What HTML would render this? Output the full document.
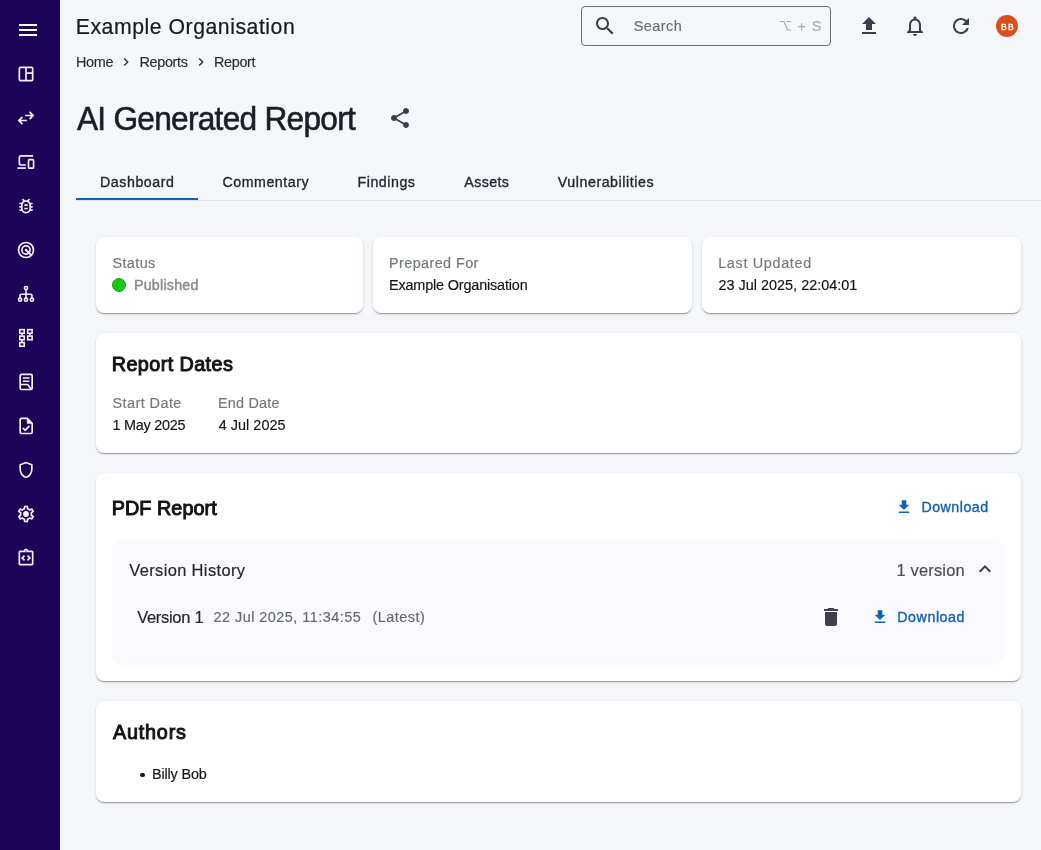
<!DOCTYPE html>
<html lang="en">
<head>
<meta charset="utf-8">
<title>AI Generated Report</title>
<style>
*{box-sizing:border-box;margin:0;padding:0}
html,body{width:1041px;height:850px;overflow:hidden;background:#f5f6fa;font-family:"Liberation Sans",sans-serif}
#app{position:relative;will-change:transform;width:1041px;height:850px;overflow:hidden;background:#f5f6fa}
.abs{position:absolute}
.t{position:absolute;white-space:pre;line-height:1;font-family:"Liberation Sans",sans-serif}
#side{position:absolute;left:0;top:0;width:60px;height:850px;background:#1c0458}
.card{position:absolute;background:#fff;border-radius:8px;box-shadow:0 2px 1px -1px rgba(0,0,0,.2),0 1px 1px 0 rgba(0,0,0,.14),0 1px 3px 0 rgba(0,0,0,.12)}
#search{position:absolute;left:581px;top:6px;width:250px;height:40px;border:1px solid #6c6e72;border-radius:4px}
#tabline{position:absolute;left:76px;top:200px;width:965px;height:1px;background:#e2e4e9}
#tabind{position:absolute;left:76px;top:198px;width:122px;height:2px;background:#1060b5}
#panel{position:absolute;left:112px;top:540px;width:892px;height:125px;border-radius:10px;background:#f9f9fe}
#dot{position:absolute;left:112px;top:278px;width:14px;height:14px;border-radius:50%;background:#17c917;border:1px solid #16a516}
#avatar{position:absolute;left:996px;top:15px;width:22px;height:22px;border-radius:50%;background:#d9501f}
#bullet{position:absolute;left:140px;top:772.6px;width:4.5px;height:4.5px;border-radius:50%;background:#131417}
svg{position:absolute;display:block;overflow:visible}
</style>
</head>
<body>
<div id="app">
<div id="side">
<svg style="left:16px;top:18px" width="24" height="24" viewBox="0 0 24 24" fill="#fff"><path d="M3 18h18v-2H3v2zm0-5h18v-2H3v2zm0-7v2h18V6H3z"/></svg>
<!-- space_dashboard -->
<svg style="left:16px;top:64px" width="20" height="20" viewBox="0 0 24 24" fill="none" stroke="#f6efff" stroke-width="2"><rect x="4" y="4" width="16" height="16" rx="1.5"/><path d="M12 4V20M12 11H20"/></svg>
<!-- swap_horiz -->
<svg style="left:16px;top:108px" width="20" height="20" viewBox="0 -960 960 960" fill="#f6efff"><path d="M280-160 80-360l200-200 56 57-103 103h287v80H233l103 103-56 57Zm400-240-56-57 103-103H440v-80h287L624-743l56-57 200 200-200 200Z"/></svg>
<!-- devices -->
<svg style="left:16px;top:152px" width="20" height="20" viewBox="0 0 24 24" fill="none" stroke="#f6efff" stroke-width="2"><path d="M20.6 4.7H6a2 2 0 0 0-2 2v6.900a2 2 0 0 0 2 2H11.900"/><path d="M1.700 19.300H11.900"/><rect x="15" y="9.200" width="6.100" height="10.200" rx="1.200"/></svg>
<!-- bug_report -->
<svg style="left:16px;top:196px" width="20" height="20" viewBox="0 0 24 24" fill="#f6efff"><path d="M20 8h-2.810c-.45-.78-1.070-1.450-1.820-1.960L17 4.410 15.590 3l-2.170 2.170C12.960 5.060 12.490 5 12 5s-.96.060-1.410.17L8.410 3 7 4.410l1.620 1.630C7.880 6.550 7.260 7.220 6.810 8H4v2h2.090c-.05.33-.09.66-.09 1v1H4v2h2v1c0 .34.04.67.09 1H4v2h2.810c1.040 1.790 2.970 3 5.190 3s4.150-1.210 5.190-3H20v-2h-2.090c.05-.33.09-.66.09-1v-1h2v-2h-2v-1c0-.34-.04-.67-.09-1H20V8zm-4 4v3c0 .22-.03.47-.07.7l-.1.65-.37.65c-.72 1.240-2.040 2-3.460 2s-2.740-.77-3.460-2l-.37-.64-.1-.65C8.030 15.480 8 15.230 8 15v-4c0-.23.03-.48.07-.7l.1-.65.37-.65c.3-.52.72-.97 1.210-1.310l.57-.39.74-.18c.31-.08.63-.12.940-.12.32 0 .63.04.95.12l.68.16.61.42c.5.34.91.78 1.210 1.310l.38.65.1.65c.04.22.07.47.07.69v1zm-6 2h4v2h-4zm0-4h4v2h-4z"/></svg>
<!-- target -->
<svg style="left:16px;top:240px" width="20" height="20" viewBox="0 0 24 24" fill="none" stroke="#f6efff" stroke-width="2"><circle cx="12" cy="12" r="9"/><circle cx="12" cy="12" r="4.900"/><path d="M12 12L18.200 18.200" stroke-width="2.200"/><circle cx="12" cy="12" r="1.500" fill="#f6efff" stroke="none"/></svg>
<!-- tree -->
<svg style="left:16px;top:284px" width="20" height="20" viewBox="0 0 24 24" fill="none" stroke="#f6efff" stroke-width="1.900"><circle cx="12" cy="4.900" r="1.900"/><circle cx="4.900" cy="18.800" r="1.900"/><circle cx="12" cy="18.800" r="1.900"/><circle cx="19.100" cy="18.800" r="1.900"/><path d="M12 6.900V16.800M4.900 16.800V13.600a1.400 1.400 0 0 1 1.400-1.400H17.700a1.400 1.400 0 0 1 1.400 1.400V16.800"/></svg>
<!-- squares -->
<svg style="left:16px;top:328px" width="20" height="20" viewBox="0 0 24 24" fill="none" stroke="#f6efff" stroke-width="1.900"><rect x="4.550" y="1.950" width="5.300" height="4.400"/><rect x="4.550" y="9.700" width="5.300" height="4.400"/><rect x="4.550" y="17.500" width="5.300" height="4.400"/><rect x="14.050" y="1.950" width="5.300" height="4.400"/><rect x="14.050" y="9.700" width="5.300" height="4.400"/><path d="M7.200 7V9M7.200 14.800V16.800M16.700 7V9" stroke-width="1.900"/></svg>
<!-- doc lines -->
<svg style="left:16px;top:372px" width="20" height="20" viewBox="0 0 24 24" fill="none" stroke="#f6efff" stroke-width="2"><rect x="5" y="2.900" width="14.400" height="18.100" rx="1.500"/><path d="M8.300 7.100H16.100M8.300 11.100H16.100" stroke-width="1.900"/><path d="M5 14.900H14L18.300 20.400" stroke-width="1.900"/></svg>
<!-- task -->
<svg style="left:16px;top:416px" width="20" height="20" viewBox="0 0 24 24" fill="none" stroke="#f6efff" stroke-width="2" stroke-linejoin="round"><path d="M13.500 2.900H6.500A1.500 1.500 0 0 0 5 4.400V19.500A1.500 1.500 0 0 0 6.500 21H17.900A1.500 1.500 0 0 0 19.400 19.500V8.800Z"/><path d="M13.500 2.900V8.800H19.400Z" fill="#f6efff" stroke-width="1"/><path d="M8.200 14.400L11 17.200L16 11.800" stroke-width="2.100" stroke-linejoin="miter"/></svg>
<!-- shield -->
<svg style="left:16px;top:460px" width="20" height="20" viewBox="0 -960 960 960" fill="#f6efff"><path d="M480-80q-139-35-229.500-159.500T160-516v-244l320-120 320 120v244q0 152-90.500 276.500T480-80Zm0-84q104-33 172-132t68-220v-189l-240-90-240 90v189q0 121 68 220t172 132Zm0-316Z"/></svg>
<!-- gear -->
<svg style="left:16px;top:504px" width="20" height="20" viewBox="0 0 24 24" fill="#f6efff"><path d="M19.430 12.980c.04-.32.07-.64.07-.98 0-.34-.03-.66-.07-.98l2.110-1.650c.19-.15.24-.42.12-.64l-2-3.460c-.09-.16-.26-.25-.44-.25-.06 0-.12.010-.17.030l-2.490 1c-.52-.4-1.080-.73-1.690-.98l-.38-2.650C14.460 2.180 14.250 2 14 2h-4c-.25 0-.46.180-.49.420l-.38 2.650c-.61.250-1.170.59-1.690.98l-2.490-1c-.06-.02-.12-.03-.18-.03-.17 0-.34.090-.43.250l-2 3.460c-.13.220-.07.490.12.640l2.110 1.650c-.04.32-.07.65-.07.980 0 .33.030.66.070.98l-2.110 1.650c-.19.150-.24.420-.12.640l2 3.460c.09.160.26.250.44.250.06 0 .12-.010.17-.030l2.490-1c.52.400 1.080.73 1.690.98l.38 2.650c.03.240.24.420.49.420h4c.25 0 .46-.18.49-.42l.38-2.650c.61-.25 1.170-.59 1.690-.98l2.490 1c.06.020.12.030.18.030.17 0 .34-.090.43-.25l2-3.460c.12-.22.07-.49-.12-.64l-2.110-1.650zm-1.980-1.710c.04.31.05.52.05.73 0 .21-.02.43-.05.73l-.14 1.130.89.700 1.080.84-.7 1.210-1.270-.51-1.040-.42-.9.680c-.43.320-.84.560-1.250.73l-1.060.43-.16 1.130-.2 1.350h-1.400l-.19-1.350-.16-1.130-1.060-.43c-.43-.18-.83-.41-1.230-.71l-.91-.7-1.060.43-1.270.51-.7-1.210 1.080-.84.89-.7-.14-1.130c-.03-.31-.05-.54-.05-.74s.02-.43.05-.73l.14-1.130-.89-.7-1.080-.84.700-1.210 1.270.51 1.040.42.900-.68c.43-.32.840-.56 1.250-.73l1.060-.43.160-1.130.200-1.350h1.390l.19 1.350.16 1.130 1.060.43c.43.180.83.410 1.230.71l.91.700 1.060-.43 1.270-.51.700 1.210-1.070.85-.89.700.14 1.130z"/><circle cx="12" cy="12" r="3.500"/></svg>
<!-- integration_instructions -->
<svg style="left:16px;top:548px" width="20" height="20" viewBox="0 0 24 24" fill="#f6efff"><path d="M11 14.170 8.830 12 11 9.830 9.590 8.410 6 12l3.590 3.590zm3.410 1.420L18 12l-3.590-3.590L13 9.830 15.170 12 13 14.170z"/><path d="M19 3h-4.180C14.400 1.840 13.300 1 12 1s-2.400.84-2.820 2H5c-.14 0-.27.010-.4.040-.39.080-.74.280-1.010.55-.18.180-.33.400-.43.640-.1.230-.16.490-.16.770v14c0 .27.060.54.160.78s.25.450.43.640c.27.270.62.470 1.010.55.130.02.260.03.400.03h14c1.100 0 2-.9 2-2V5c0-1.100-.9-2-2-2zm-7-.25c.41 0 .75.340.75.750s-.34.750-.75.750-.75-.34-.75-.75.340-.75.750-.75zM19 19H5V5h14v14z"/></svg>

</div>
<div id="search"></div>
<div id="avatar"></div>
<div id="tabline"></div>
<div id="tabind"></div>
<div class="card" style="left:96px;top:237px;width:267px;height:76px"></div>
<div class="card" style="left:373px;top:237px;width:319px;height:76px"></div>
<div class="card" style="left:702px;top:237px;width:319px;height:76px"></div>
<div class="card" style="left:96px;top:333px;width:925px;height:120px"></div>
<div class="card" style="left:96px;top:473px;width:925px;height:208px"></div>
<div class="card" style="left:96px;top:701px;width:925px;height:101px"></div>
<div id="panel"></div>
<div id="dot"></div>
<div id="bullet"></div>
<svg style="left:593px;top:14px" width="24" height="24" viewBox="0 0 24 24" fill="#3b3e44"><path d="M15.5 14h-.79l-.28-.27C15.41 12.59 16 11.11 16 9.5 16 5.91 13.09 3 9.5 3S3 5.91 3 9.5 5.91 16 9.5 16c1.61 0 3.09-.59 4.23-1.57l.27.28v.79l5 4.99L20.49 19l-4.99-5zm-6 0C7.01 14 5 11.99 5 9.5S7.01 5 9.5 5 14 7.01 14 9.5 11.99 14 9.500 14z"/></svg>
<svg style="left:780.3px;top:21.1px" width="11" height="9.5" viewBox="0 0 11 9.5" fill="none" stroke="#a9abae" stroke-width="1.1"><path d="M0 0.55H3.9L7.6 8.95H11M6.6 0.55H11"/></svg>
<svg style="left:798.4px;top:23.15px" width="7.2" height="7.2" viewBox="0 0 7.2 7.2" fill="none" stroke="#a9abae" stroke-width="1.15"><path d="M0 3.6H7.2M3.6 0V7.2"/></svg>
<svg style="left:857px;top:14px" width="24" height="24" viewBox="0 0 24 24" fill="#3b3e4a"><path d="M9 16h6v-6h4l-7-7-7 7h4zm-4 2h14v2H5z"/></svg>
<svg style="left:903px;top:14px" width="24" height="24" viewBox="0 0 24 24" fill="#3b3e4a"><path d="M12 22c1.1 0 2-.9 2-2h-4c0 1.1.9 2 2 2zm6-6v-5c0-3.07-1.63-5.64-4.5-6.32V4c0-.83-.67-1.5-1.5-1.5s-1.5.67-1.5 1.5v.68C7.640 5.360 6 7.920 6 11v5l-2 2v1h16v-1l-2-2zm-2 1H8v-6c0-2.480 1.510-4.500 4-4.500s4 2.020 4 4.500v6z"/></svg>
<svg style="left:949px;top:14px" width="24" height="24" viewBox="0 0 24 24" fill="#3b3e4a"><path d="M17.65 6.35C16.2 4.9 14.21 4 12 4c-4.42 0-7.990 3.580-7.990 8s3.570 8 7.990 8c3.730 0 6.840-2.550 7.730-6h-2.080c-.82 2.330-3.040 4-5.650 4-3.310 0-6-2.690-6-6s2.690-6 6-6c1.660 0 3.140.69 4.220 1.780L13 11h7V4l-2.350 2.350z"/></svg>
<svg style="left:387.7px;top:106px" width="24" height="24" viewBox="0 0 24 24" fill="#3b3e44"><path d="M18 16.080c-.76 0-1.440.3-1.960.77L8.910 12.700c.05-.23.09-.46.09-.7s-.04-.47-.09-.7l7.050-4.110c.54.5 1.250.81 2.040.81 1.660 0 3-1.340 3-3s-1.340-3-3-3-3 1.340-3 3c0 .24.04.47.09.7L8.040 9.810C7.500 9.310 6.790 9 6 9c-1.660 0-3 1.340-3 3s1.340 3 3 3c.79 0 1.500-.31 2.040-.81l7.120 4.160c-.05.21-.08.43-.08.65 0 1.610 1.310 2.920 2.920 2.920s2.920-1.310 2.920-2.920-1.310-2.920-2.920-2.920z"/></svg>
<svg style="left:118.37px;top:54.35px" width="16" height="16" viewBox="0 0 24 24" fill="#2a2d33"><path d="M10 6L8.59 7.41 13.17 12l-4.58 4.59L10 18l6-6z"/></svg>
<svg style="left:193.07px;top:54.35px" width="16" height="16" viewBox="0 0 24 24" fill="#2a2d33"><path d="M10 6L8.59 7.41 13.17 12l-4.58 4.59L10 18l6-6z"/></svg>
<svg style="left:895.35px;top:497.85px" width="18" height="18" viewBox="0 0 24 24" fill="#1060b5"><path d="M5 20h14v-2H5v2zM19 9h-4V3H9v6H5l7 7 7-7z"/></svg>
<svg style="left:871.05px;top:607.9px" width="18" height="18" viewBox="0 0 24 24" fill="#1060b5"><path d="M5 20h14v-2H5v2zM19 9h-4V3H9v6H5l7 7 7-7z"/></svg>
<svg style="left:973px;top:557px" width="24" height="24" viewBox="0 0 24 24" fill="#3a3d44"><path d="M12 8l-6 6 1.41 1.41L12 10.83l4.59 4.58L18 14z"/></svg>
<svg style="left:819px;top:605px" width="24" height="24" viewBox="0 0 24 24" fill="#3d404c"><path d="M6 19c0 1.1.9 2 2 2h8c1.1 0 2-.9 2-2V7H6v12zM19 4h-3.5l-1-1h-5l-1 1H5v2h14V4z"/></svg>

<span class="t" style="left:75.75px;top:16.00px;font-size:21.22px;font-weight:400;letter-spacing:0.539px;color:#1a1b1f;-webkit-text-stroke:0.23px #1a1b1f;">Example Organisation</span>
<span class="t" style="left:76.00px;top:55.00px;font-size:14.42px;font-weight:400;letter-spacing:-0.333px;color:#2a2d33;-webkit-text-stroke:0.16px #2a2d33;">Home</span>
<span class="t" style="left:139.50px;top:55.00px;font-size:14.42px;font-weight:400;letter-spacing:-0.333px;color:#2a2d33;-webkit-text-stroke:0.16px #2a2d33;">Reports</span>
<span class="t" style="left:214.00px;top:55.00px;font-size:14.42px;font-weight:400;letter-spacing:-0.35px;color:#2a2d33;-webkit-text-stroke:0.16px #2a2d33;">Report</span>
<span class="t" style="left:77.25px;top:103.00px;font-size:32.64px;font-weight:400;letter-spacing:-0.759px;color:#1b1e23;-webkit-text-stroke:0.59px #1b1e23;transform-origin:0 0;transform:scaleX(0.97);">AI Generated Report</span>
<span class="t" style="left:100.00px;top:175.00px;font-size:14.21px;font-weight:400;letter-spacing:0.562px;color:#24272c;-webkit-text-stroke:0.34px #24272c;">Dashboard</span>
<span class="t" style="left:222.50px;top:175.00px;font-size:14.21px;font-weight:400;letter-spacing:0.528px;color:#24272c;-webkit-text-stroke:0.34px #24272c;">Commentary</span>
<span class="t" style="left:357.50px;top:175.00px;font-size:14.21px;font-weight:400;letter-spacing:0.536px;color:#24272c;-webkit-text-stroke:0.34px #24272c;">Findings</span>
<span class="t" style="left:464.35px;top:175.00px;font-size:14.21px;font-weight:400;letter-spacing:0.38px;color:#24272c;-webkit-text-stroke:0.34px #24272c;">Assets</span>
<span class="t" style="left:557.80px;top:175.00px;font-size:14.21px;font-weight:400;letter-spacing:0.557px;color:#24272c;-webkit-text-stroke:0.34px #24272c;">Vulnerabilities</span>
<span class="t" style="left:633.75px;top:19.00px;font-size:14.42px;font-weight:400;letter-spacing:0.45px;color:#6a6c70;-webkit-text-stroke:0.16px #6a6c70;">Search</span>
<span class="t" style="left:811.70px;top:19.00px;font-size:14.42px;font-weight:400;letter-spacing:-0.5px;color:#a9abae;-webkit-text-stroke:0.16px #a9abae;">S</span>
<span class="t" style="left:1000.60px;top:23.00px;font-size:8.98px;font-weight:400;letter-spacing:1.383px;color:#fff;-webkit-text-stroke:0.29px #fff;transform-origin:0 0;transform:scaleX(0.94);">BB</span>
<span class="t" style="left:112.50px;top:256.00px;font-size:14.42px;font-weight:400;letter-spacing:0.38px;color:#75777b;-webkit-text-stroke:0.16px #75777b;">Status</span>
<span class="t" style="left:133.90px;top:278.00px;font-size:14.28px;font-weight:400;letter-spacing:0.238px;color:#8b8b8b;-webkit-text-stroke:0.46px #8b8b8b;">Published</span>
<span class="t" style="left:389.00px;top:256.00px;font-size:14.42px;font-weight:400;letter-spacing:0.409px;color:#75777b;-webkit-text-stroke:0.16px #75777b;">Prepared For</span>
<span class="t" style="left:389.00px;top:278.00px;font-size:14.42px;font-weight:400;letter-spacing:-0.158px;color:#131417;-webkit-text-stroke:0.16px #131417;">Example Organisation</span>
<span class="t" style="left:718.20px;top:256.00px;font-size:14.42px;font-weight:400;letter-spacing:0.668px;color:#75777b;-webkit-text-stroke:0.16px #75777b;">Last Updated</span>
<span class="t" style="left:718.45px;top:278.00px;font-size:14.42px;font-weight:400;letter-spacing:0.017px;color:#131417;-webkit-text-stroke:0.16px #131417;">23 Jul 2025, 22:04:01</span>
<span class="t" style="left:111.75px;top:355.00px;font-size:19.8px;font-weight:400;letter-spacing:0.409px;color:#131417;-webkit-text-stroke:0.99px #131417;">Report Dates</span>
<span class="t" style="left:112.50px;top:396.00px;font-size:14.42px;font-weight:400;letter-spacing:0.444px;color:#75777b;-webkit-text-stroke:0.16px #75777b;">Start Date</span>
<span class="t" style="left:112.50px;top:418.00px;font-size:14.42px;font-weight:400;letter-spacing:-0.25px;color:#131417;-webkit-text-stroke:0.16px #131417;">1 May 2025</span>
<span class="t" style="left:218.00px;top:396.00px;font-size:14.42px;font-weight:400;letter-spacing:0.214px;color:#75777b;-webkit-text-stroke:0.16px #75777b;">End Date</span>
<span class="t" style="left:218.75px;top:418.00px;font-size:14.42px;font-weight:400;letter-spacing:0.028px;color:#131417;-webkit-text-stroke:0.16px #131417;">4 Jul 2025</span>
<span class="t" style="left:111.75px;top:499.00px;font-size:19.8px;font-weight:400;letter-spacing:0.056px;color:#131417;-webkit-text-stroke:0.99px #131417;">PDF Report</span>
<span class="t" style="left:921.40px;top:500.00px;font-size:14.21px;font-weight:400;letter-spacing:0.514px;color:#1060b5;-webkit-text-stroke:0.34px #1060b5;">Download</span>
<span class="t" style="left:129.25px;top:562.00px;font-size:16.48px;font-weight:400;letter-spacing:0.357px;color:#24272c;-webkit-text-stroke:0.18px #24272c;">Version History</span>
<span class="t" style="left:896.55px;top:562.00px;font-size:16.48px;font-weight:400;letter-spacing:0.156px;color:#4b4e54;-webkit-text-stroke:0.18px #4b4e54;">1 version</span>
<span class="t" style="left:137.20px;top:609.00px;font-size:16.48px;font-weight:400;letter-spacing:-0.287px;color:#24272c;-webkit-text-stroke:0.18px #24272c;">Version 1</span>
<span class="t" style="left:213.55px;top:610.00px;font-size:14.42px;font-weight:400;letter-spacing:0.482px;color:#66686c;-webkit-text-stroke:0.16px #66686c;">22 Jul 2025, 11:34:55</span>
<span class="t" style="left:372.55px;top:610.00px;font-size:14.42px;font-weight:400;letter-spacing:0.479px;color:#66686c;-webkit-text-stroke:0.16px #66686c;">(Latest)</span>
<span class="t" style="left:897.30px;top:610.00px;font-size:14.21px;font-weight:400;letter-spacing:0.571px;color:#1060b5;-webkit-text-stroke:0.34px #1060b5;">Download</span>
<span class="t" style="left:112.95px;top:723.00px;font-size:19.8px;font-weight:400;letter-spacing:0.8px;color:#131417;-webkit-text-stroke:0.99px #131417;">Authors</span>
<span class="t" style="left:152.00px;top:767.00px;font-size:14.42px;font-weight:400;letter-spacing:-0.156px;color:#131417;-webkit-text-stroke:0.16px #131417;">Billy Bob</span>
</div>
</body>
</html>
